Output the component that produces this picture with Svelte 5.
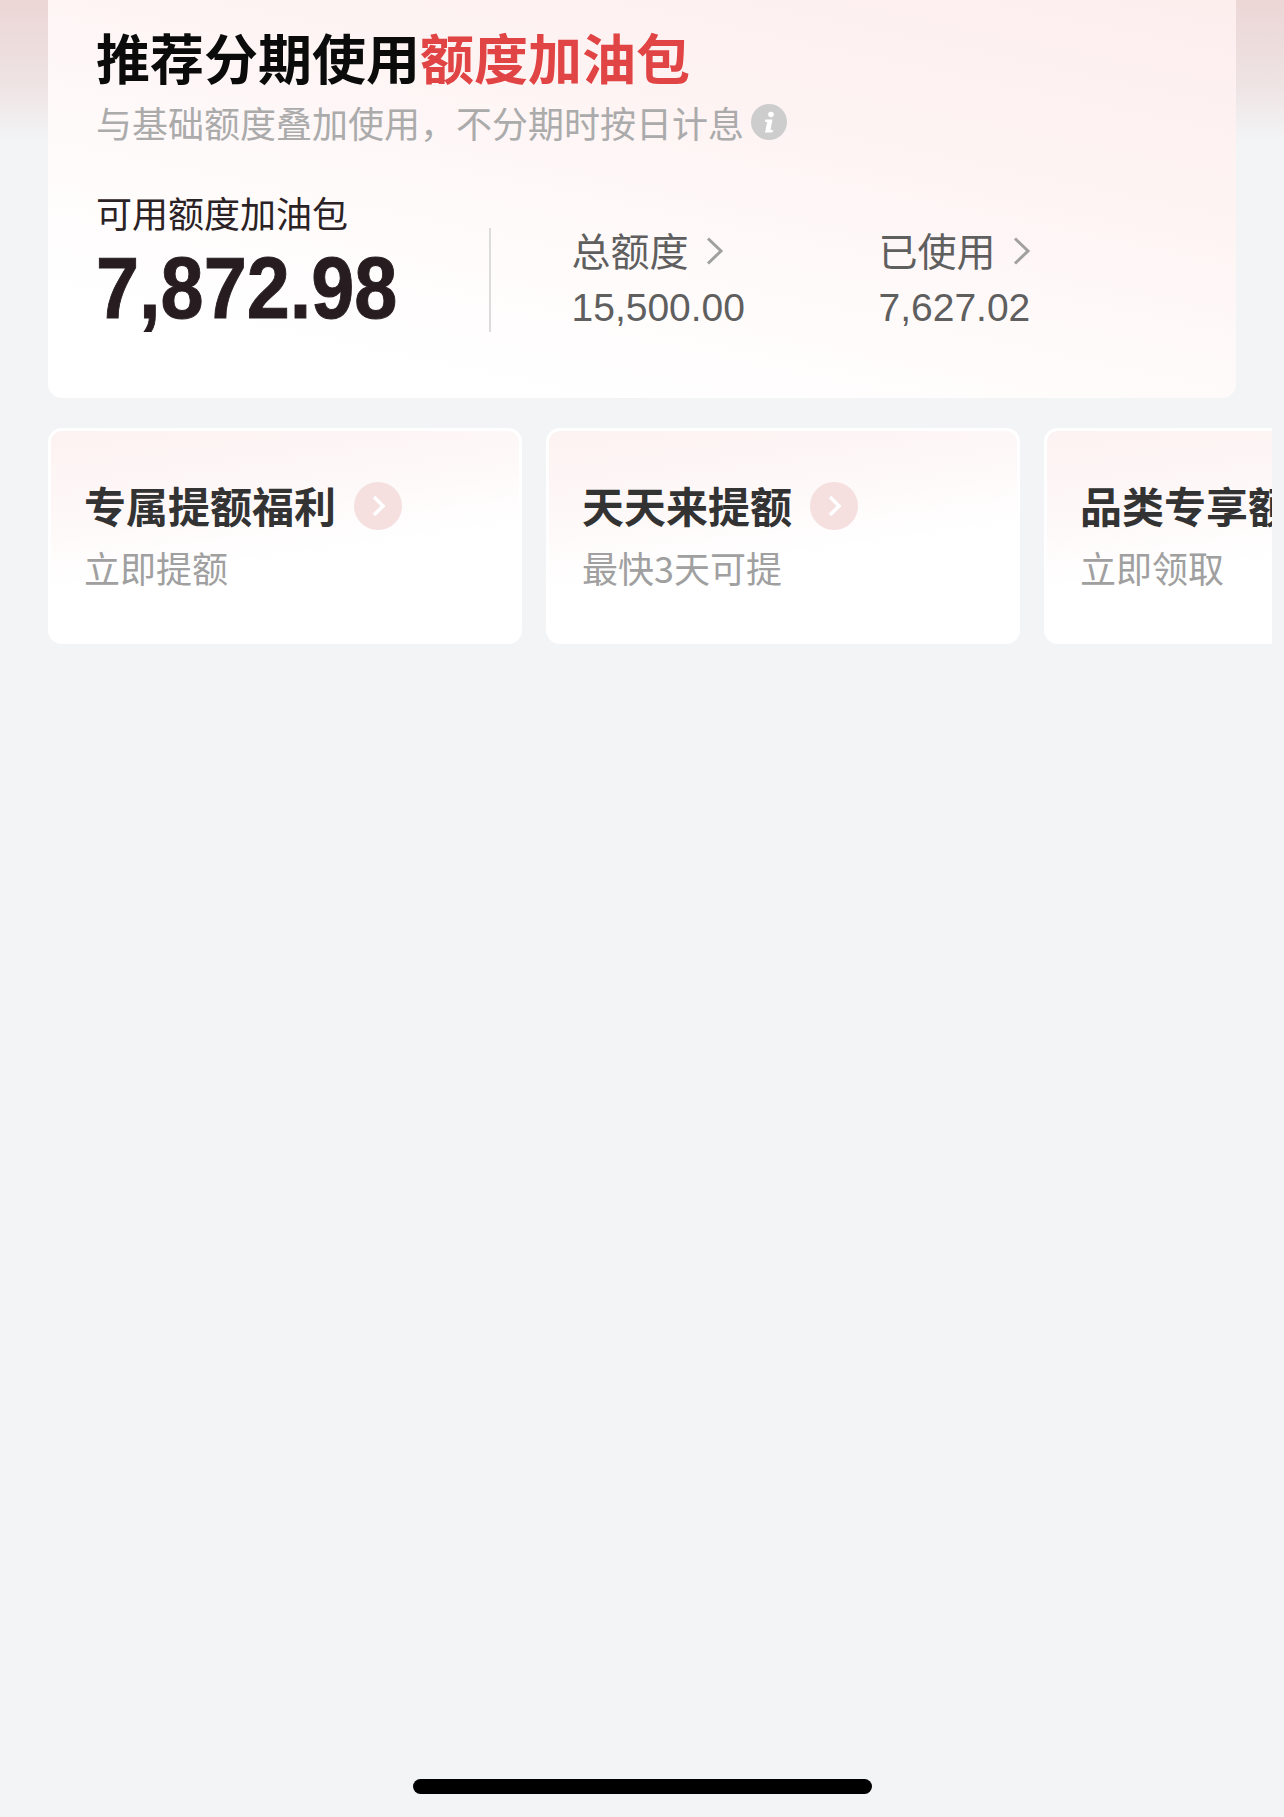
<script>
    const cards = [
        { title: '专属提额福利', sub: '立即提额', arrow: true },
        { title: '天天来提额', sub: '最快3天可提', arrow: true },
        { title: '品类专享额度', sub: '立即领取', arrow: false }
    ];
</script>

<div class="page">
    <section class="main-card">
        <h1>推荐分期使用<span class="red">额度加油包</span></h1>
        <div class="subtitle">
            与基础额度叠加使用，不分期时按日计息
            <svg class="info" viewBox="0 0 36 36" width="36" height="36">
                <circle cx="18" cy="18" r="18" fill="#cdcdcd" />
                <circle cx="20" cy="10.5" r="2.8" fill="#fff" />
                <path d="M14.5 15.5h7l-2 10.5h2.5l-.6 2.5h-7.4l2.2-10.5h-2.2z" fill="#fff" />
            </svg>
        </div>

        <div class="stats">
            <div class="available">
                <div class="available-label">可用额度加油包</div>
                <div class="available-value">7,872.98</div>
            </div>
            <div class="divider"></div>
            <div class="stat total">
                <div class="stat-label">总额度
                    <svg viewBox="0 0 18 28" width="18" height="28"><path d="M2 1.5l13 12.5L2 26.5" fill="none" stroke="#a0a0a0" stroke-width="3" /></svg>
                </div>
                <div class="stat-value">15,500.00</div>
            </div>
            <div class="stat">
                <div class="stat-label">已使用
                    <svg viewBox="0 0 18 28" width="18" height="28"><path d="M2 1.5l13 12.5L2 26.5" fill="none" stroke="#a0a0a0" stroke-width="3" /></svg>
                </div>
                <div class="stat-value">7,627.02</div>
            </div>
        </div>
    </section>

    <div class="card-row">
        {#each cards as card}
            <div class="small-card">
                <div class="small-title">
                    <span>{card.title}</span>
                    {#if card.arrow}
                        <svg class="go" viewBox="0 0 48 48" width="48" height="48">
                            <circle cx="24" cy="24" r="24" fill="#f5dfdf" />
                            <path d="M20 15l9 9-9 9" fill="none" stroke="#fff" stroke-width="3.6" />
                        </svg>
                    {/if}
                </div>
                <div class="small-sub">{card.sub}</div>
            </div>
        {/each}
    </div>

    <div class="home-bar"></div>
</div>

<style>
    :global(body) {
        margin: 0;
        background: #f3f4f6;
    }

    .page {
        height: 1817px;
        box-sizing: border-box;
        display: flex;
        flex-direction: column;
        overflow: hidden;
        font-family: "Noto Sans CJK SC", "Liberation Sans", sans-serif;
        background: linear-gradient(180deg, #ecd6d6 0%, #eee3e3 60%, #f3f4f6 100%) no-repeat top / 100% 140px;
    }

    .main-card {
        margin: 0 48px;
        height: 398px;
        box-sizing: border-box;
        padding: 23px 0 0 48px;
        border-radius: 0 0 14px 14px;
        background: linear-gradient(192deg, #fdeeee 0%, #fef3f3 32%, #fffafa 58%, #ffffff 84%);
    }

    h1 {
        margin: 0;
        font-size: 54px;
        line-height: 68px;
        font-weight: 700;
        color: #0b0b0b;
    }

    .red {
        color: #e04444;
    }

    .subtitle {
        display: flex;
        align-items: center;
        gap: 7px;
        margin-top: 5px;
        font-size: 36px;
        line-height: 52px;
        color: #ababab;
    }

    .stats {
        display: flex;
        align-items: flex-start;
        margin-top: 41px;
    }

    .available {
        width: 393px;
    }

    .available-label {
        font-size: 36px;
        line-height: 46px;
        color: #2b2225;
    }

    .available-value {
        font-family: "Liberation Sans", sans-serif;
        font-size: 88px;
        line-height: 88px;
        font-weight: 700;
        color: #271d20;
        margin-top: 9px;
        transform: scaleX(0.88);
        transform-origin: left center;
        -webkit-text-stroke: 1px #271d20;
    }

    .divider {
        width: 1.5px;
        height: 104px;
        margin-top: 39px;
        background: #dcdcdc;
    }

    .stat {
        margin-top: 34px;
        color: #5f5f5f;
    }

    .total {
        margin-left: 81px;
        width: 307px;
    }

    .stat-label {
        display: flex;
        align-items: center;
        gap: 17px;
        font-size: 39px;
        line-height: 52px;
    }

    .stat-label svg {
        margin-top: 3px;
    }

    .stat-value {
        font-family: "Liberation Sans", sans-serif;
        font-size: 39px;
        line-height: 52px;
        margin-top: 7px;
    }

    .card-row {
        display: flex;
        gap: 24px;
        margin: 30px 12px 0 48px;
        overflow: hidden;
    }

    .small-card {
        flex: 0 0 474px;
        height: 216px;
        box-sizing: border-box;
        padding: 49px 0 0 33px;
        border: 3px solid #fff;
        border-radius: 14px;
        background: linear-gradient(172deg, #fdf2f2 0%, #fef8f8 32%, #ffffff 58%);
        white-space: nowrap;
    }

    .small-title {
        display: flex;
        align-items: center;
        gap: 18px;
        font-size: 42px;
        line-height: 50px;
        font-weight: 700;
        color: #333;
    }

    .go {
        margin-top: 2px;
    }

    .small-sub {
        margin-top: 13px;
        font-size: 36px;
        line-height: 48px;
        color: #a0a0a0;
    }

    .home-bar {
        width: 459px;
        height: 15px;
        border-radius: 8px;
        background: #000;
        margin: auto auto 23px;
    }
</style>
